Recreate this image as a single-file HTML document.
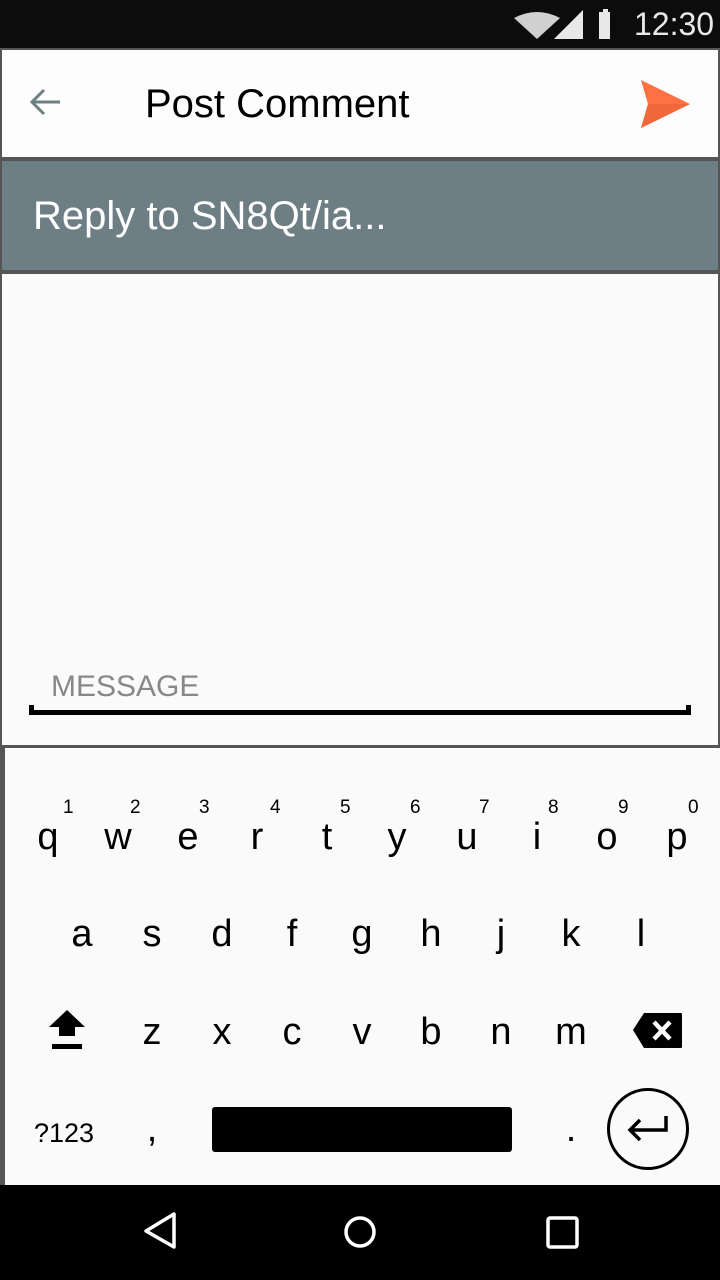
<!DOCTYPE html>
<html><head><meta charset="utf-8"><style>
*{margin:0;padding:0;box-sizing:border-box}
body{width:720px;height:1280px;position:relative;background:#fafafa;font-family:"Liberation Sans Narrow","Liberation Sans",sans-serif;overflow:hidden}
.a{position:absolute}
.k{position:absolute;font-size:38px;color:#000;width:60px;text-align:center;line-height:1}
.n{position:absolute;font-size:19px;color:#000;line-height:1}
</style></head><body>
<div class="a" style="left:0;top:0;width:720px;height:48px;background:#0c0c0c"></div>
<svg class="a" style="left:510px;top:8px" width="100" height="34" viewBox="0 0 100 34">
<path d="M4 10 Q27 -2 50 10 L27 31 Z" fill="#d0d0d0"/>
<path d="M44 31 L73 31 L73 2 Z" fill="#e8e8e8"/>
<rect x="89" y="4" width="13" height="27" fill="#e8e8e8"/><rect x="93" y="1" width="5" height="4" fill="#e8e8e8"/>
</svg>
<div class="a" style="left:634px;top:6px;font-size:32px;color:#e8e8e8;line-height:36px">12:30</div>
<div class="a" style="left:0;top:48px;width:720px;height:112px;background:#fdfdfd;border:2px solid #555;border-bottom-width:3px"></div>
<svg class="a" style="left:30px;top:88px" width="34" height="30" viewBox="0 0 34 30"><path d="M2 14 H30 M14 2 L2 14 L14 26" stroke="#6e7e85" stroke-width="3" fill="none"/></svg>
<div class="a" style="left:145px;top:80px;font-size:40px;color:#000;line-height:48px">Post Comment</div>
<svg class="a" style="left:638px;top:78px" width="54" height="52" viewBox="0 0 54 52"><path d="M3 2 L52 26 L3 50 L10 26 Z" fill="#ff7043"/><path d="M10 26 L52 26 L3 50 Z" fill="#f0683a"/></svg>
<div class="a" style="left:0;top:158px;width:720px;height:116px;background:#6e7e85;border:2px solid #555;border-width:3px 2px 4px"></div>
<div class="a" style="left:33px;top:192px;font-size:40px;color:#fff;line-height:48px">Reply to SN8Qt/ia...</div>
<div class="a" style="left:0;top:272px;width:720px;height:476px;border-left:2px solid #555;border-right:2px solid #555;border-bottom:3px solid #555"></div>
<div class="a" style="left:51px;top:670px;font-size:30px;color:#888;line-height:34px">MESSAGE</div>
<div class="a" style="left:29px;top:710px;width:662px;height:5px;background:#000"></div>
<div class="a" style="left:29px;top:705px;width:5px;height:10px;background:#000"></div>
<div class="a" style="left:686px;top:705px;width:5px;height:10px;background:#000"></div>
<div class="a" style="left:0;top:748px;width:5px;height:437px;background:#555"></div>
<div class="k" style="left:18px;top:818px">q</div><div class="n" style="left:63px;top:798px">1</div>
<div class="k" style="left:88px;top:818px">w</div><div class="n" style="left:130px;top:798px">2</div>
<div class="k" style="left:158px;top:818px">e</div><div class="n" style="left:199px;top:798px">3</div>
<div class="k" style="left:227px;top:818px">r</div><div class="n" style="left:270px;top:798px">4</div>
<div class="k" style="left:297px;top:818px">t</div><div class="n" style="left:340px;top:798px">5</div>
<div class="k" style="left:367px;top:818px">y</div><div class="n" style="left:410px;top:798px">6</div>
<div class="k" style="left:437px;top:818px">u</div><div class="n" style="left:479px;top:798px">7</div>
<div class="k" style="left:507px;top:818px">i</div><div class="n" style="left:548px;top:798px">8</div>
<div class="k" style="left:577px;top:818px">o</div><div class="n" style="left:618px;top:798px">9</div>
<div class="k" style="left:647px;top:818px">p</div><div class="n" style="left:688px;top:798px">0</div>
<div class="k" style="left:52px;top:915px">a</div><div class="k" style="left:122px;top:915px">s</div><div class="k" style="left:192px;top:915px">d</div><div class="k" style="left:262px;top:915px">f</div><div class="k" style="left:332px;top:915px">g</div><div class="k" style="left:401px;top:915px">h</div><div class="k" style="left:471px;top:915px">j</div><div class="k" style="left:541px;top:915px">k</div><div class="k" style="left:611px;top:915px">l</div>
<svg class="a" style="left:48px;top:1010px" width="40" height="42" viewBox="0 0 40 42"><path d="M19 0 L37 17 L27 17 L27 26 L11 26 L11 17 L1 17 Z" fill="#000"/><rect x="4" y="34" width="30" height="5" fill="#000"/></svg>
<div class="k" style="left:122px;top:1013px">z</div><div class="k" style="left:192px;top:1013px">x</div><div class="k" style="left:262px;top:1013px">c</div><div class="k" style="left:332px;top:1013px">v</div><div class="k" style="left:401px;top:1013px">b</div><div class="k" style="left:471px;top:1013px">n</div><div class="k" style="left:541px;top:1013px">m</div>
<svg class="a" style="left:632px;top:1012px" width="52" height="38" viewBox="0 0 52 38"><path d="M12 1 L49 1 Q50 1 50 3 L50 35 Q50 36 48 36 L12 36 L1 18 Z" fill="#000"/><path d="M22 10 L38 27 M38 10 L22 27" stroke="#fff" stroke-width="4.5"/></svg>
<div class="a" style="left:34px;top:1118px;font-size:27px;line-height:30px">?123</div>
<div class="k" style="left:122px;top:1110px">,</div>
<div class="a" style="left:212px;top:1107px;width:300px;height:45px;background:#000;border-radius:3px"></div>
<div class="k" style="left:541px;top:1110px">.</div>
<div class="a" style="left:607px;top:1088px;width:82px;height:82px;border:3px solid #000;border-radius:50%"></div>
<svg class="a" style="left:626px;top:1112px" width="44" height="34" viewBox="0 0 44 34"><path d="M40 4 V18 H5 M14 8 L4 18 L14 28" stroke="#000" stroke-width="3.5" fill="none"/></svg>
<div class="a" style="left:0;top:1185px;width:720px;height:95px;background:#000"></div>
<svg class="a" style="left:140px;top:1210px" width="440" height="46" viewBox="0 0 440 46"><path d="M34 4 L34 37 L6 21 Z" stroke="#fff" stroke-width="3.5" fill="none" stroke-linejoin="round"/><ellipse cx="220" cy="22" rx="14" ry="14" stroke="#fff" stroke-width="3.5" fill="none"/><rect x="408" y="8" width="29" height="29" rx="2" stroke="#fff" stroke-width="3.5" fill="none"/></svg>
</body></html>
